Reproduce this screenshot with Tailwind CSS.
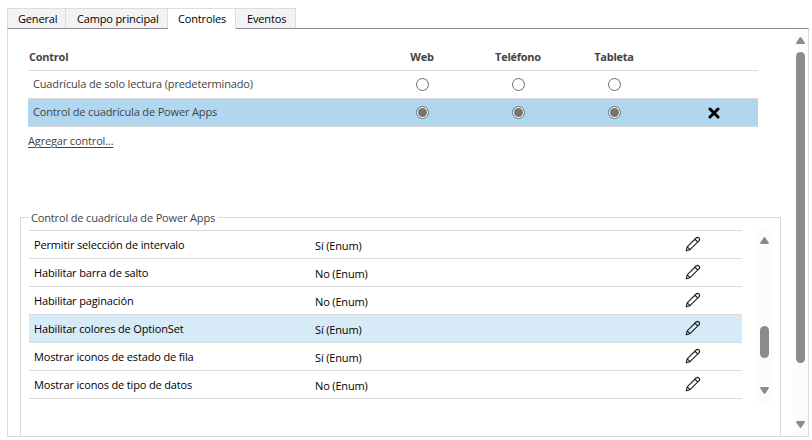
<!DOCTYPE html>
<html lang="es">
<head>
<meta charset="utf-8">
<title>Controles</title>
<script src="https://cdn.jsdelivr.net/npm/@tailwindcss/browser@4"></script>
</head>
<body class="w-[812px] h-[440px] overflow-hidden bg-white pl-[7px] pt-2 text-[11px] text-[#444] font-['Open_Sans','Noto_Sans',sans-serif]">
<svg class="hidden">
  <symbol id="pencil" viewBox="0 0 16 16"><path d="M1.2 14.8 2.2 10.9 11.1 2a1.9 1.9 0 0 1 2.8 2.8L5 13.7ZM2.2 10.9 5 13.7M9.9 3.2l2.8 2.8" fill="none" stroke="#222" stroke-width="1.15" stroke-linejoin="round"/></symbol>
  <symbol id="up" viewBox="0 0 9 7"><path d="M4.5 0Q5 0 5.5.8L8.7 5.5Q9.3 7 8 7H1Q-.3 7 .3 5.5L3.5.8Q4 0 4.5 0Z" fill="#8b8b8b"/></symbol>
</svg>
<nav class="relative z-10 flex h-[21px] w-[289px] text-black">
  <div class="w-[59px] h-5 border-t border-x border-[#dcdcdc] bg-[#f3f3f3] pl-[10px] leading-[19px] whitespace-nowrap tracking-[-0.15px]">General</div>
  <div class="w-[102px] h-5 border-t border-r border-[#dcdcdc] bg-[#f3f3f3] pl-[11px] leading-[19px] whitespace-nowrap tracking-[-0.15px]">Campo principal</div>
  <div class="w-[68px] h-[21px] border-t border-r border-[#dcdcdc] bg-white pl-[10px] leading-[19px] whitespace-nowrap tracking-[-0.15px]">Controles</div>
  <div class="w-[60px] h-5 border-t border-r border-[#dcdcdc] bg-[#f3f3f3] pl-[11px] leading-[19px] whitespace-nowrap tracking-[-0.15px]">Eventos</div>
</nav>
<main class="-mt-px flex h-[409px] w-[802px] border border-[#dadada] border-t-[#8c8794]">
  <div class="w-[785px] pl-3">
    <section class="ml-2 w-[730px]">
      <div class="flex h-[42px] items-end border-b border-[#dadada] font-bold leading-[26px] whitespace-nowrap">
        <div class="w-[346px] pl-px tracking-[-0.25px]">Control</div>
        <div class="w-24 text-center tracking-[-0.25px]">Web</div>
        <div class="w-24 text-center tracking-[-0.25px]">Teléfono</div>
        <div class="w-24 text-center tracking-[-0.25px]">Tableta</div>
      </div>
      <div class="flex h-7 items-center border-b border-[#dadada]">
        <div class="w-[346px] pl-[5px] tracking-[-0.15px]">Cuadrícula de solo lectura (predeterminado)</div>
        <div class="flex w-24 justify-center"><i class="size-[13px] rounded-full border border-[#6b6b6b] bg-white"></i></div>
        <div class="flex w-24 justify-center"><i class="size-[13px] rounded-full border border-[#6b6b6b] bg-white"></i></div>
        <div class="flex w-24 justify-center"><i class="size-[13px] rounded-full border border-[#6b6b6b] bg-white"></i></div>
      </div>
      <div class="flex h-7 items-center border-b border-[#dadada] bg-[#b1d6f0]">
        <div class="w-[346px] pl-[5px] tracking-[-0.15px]">Control de cuadrícula de Power Apps</div>
        <div class="flex w-24 justify-center"><i class="flex size-[13px] items-center justify-center rounded-full border border-[#6b6b6b] bg-white"><b class="size-[9px] rounded-full bg-[#757575]"></b></i></div>
        <div class="flex w-24 justify-center"><i class="flex size-[13px] items-center justify-center rounded-full border border-[#6b6b6b] bg-white"><b class="size-[9px] rounded-full bg-[#757575]"></b></i></div>
        <div class="flex w-24 justify-center"><i class="flex size-[13px] items-center justify-center rounded-full border border-[#6b6b6b] bg-white"><b class="size-[9px] rounded-full bg-[#757575]"></b></i></div>
        <svg class="ml-[46px] h-3 w-3" viewBox="0 0 12 12"><path d="M2 2 10 10M10 2 2 10" stroke="#000" stroke-width="3" stroke-linecap="round"/></svg>
      </div>
      <div class="h-[90px] pt-[6px] leading-4"><a class="underline underline-offset-[2px] tracking-[-0.15px]">Agregar control...</a></div>
    </section>
    <fieldset class="relative h-[219px] w-[761px] border border-b-0 border-[#dadada] pt-3 pl-2">
      <legend class="absolute -top-2 left-2 bg-white pr-[3px] pl-[2px] leading-4 whitespace-nowrap tracking-[-0.15px]">Control de cuadrícula de Power Apps</legend>
      <div class="flex">
        <div class="w-[713px] border-t border-[#dadada] text-black" id="rows">
          <div class="flex h-7 border-b border-[#dadada] leading-[27px]"><div class="w-[286px] pl-[5px] tracking-[-0.15px]">Permitir selección de intervalo</div><div class="w-[370px] pt-px tracking-[-0.15px]">Sí (Enum)</div><svg class="mt-[5px] size-4"><use href="#pencil"/></svg></div>
          <div class="flex h-7 border-b border-[#dadada] leading-[27px]"><div class="w-[286px] pl-[5px] tracking-[-0.15px]">Habilitar barra de salto</div><div class="w-[370px] pt-px tracking-[-0.15px]">No (Enum)</div><svg class="mt-[5px] size-4"><use href="#pencil"/></svg></div>
          <div class="flex h-7 border-b border-[#dadada] leading-[27px]"><div class="w-[286px] pl-[5px] tracking-[-0.15px]">Habilitar paginación</div><div class="w-[370px] pt-px tracking-[-0.15px]">No (Enum)</div><svg class="mt-[5px] size-4"><use href="#pencil"/></svg></div>
          <div class="flex h-7 border-b border-[#dadada] bg-[#d7eaf8] leading-[27px]"><div class="w-[286px] pl-[5px] tracking-[-0.15px]">Habilitar colores de OptionSet</div><div class="w-[370px] pt-px tracking-[-0.15px]">Sí (Enum)</div><svg class="mt-[5px] size-4"><use href="#pencil"/></svg></div>
          <div class="flex h-7 border-b border-[#dadada] leading-[27px]"><div class="w-[286px] pl-[5px] tracking-[-0.15px]">Mostrar iconos de estado de fila</div><div class="w-[370px] pt-px tracking-[-0.15px]">Sí (Enum)</div><svg class="mt-[5px] size-4"><use href="#pencil"/></svg></div>
          <div class="flex h-7 border-b border-[#dadada] leading-[27px]"><div class="w-[286px] pl-[5px] tracking-[-0.15px]">Mostrar iconos de tipo de datos</div><div class="w-[370px] pt-px tracking-[-0.15px]">No (Enum)</div><svg class="mt-[5px] size-4"><use href="#pencil"/></svg></div>
        </div>
        <div class="-mt-px ml-[15px] flex h-[173px] w-[15px] flex-col items-center bg-[#fcfcfc] pt-2">
          <svg class="h-[7px] w-[9px]"><use href="#up"/></svg>
          <div class="mt-[82px] h-8 w-[9px] rounded-full bg-[#8b8b8b]"></div>
          <svg class="mt-[29px] h-[7px] w-[9px] rotate-180"><use href="#up"/></svg>
        </div>
      </div>
    </fieldset>
  </div>
  <div class="flex w-[15px] flex-col items-center bg-[#fcfcfc] pt-2">
    <svg class="h-[7px] w-[9px]"><use href="#up"/></svg>
    <div class="mt-2 h-[311px] w-[9px] rounded-full bg-[#8b8b8b]"></div>
    <svg class="mt-[58px] h-[7px] w-[9px] rotate-180"><use href="#up"/></svg>
  </div>
</main>
</body>
</html>
